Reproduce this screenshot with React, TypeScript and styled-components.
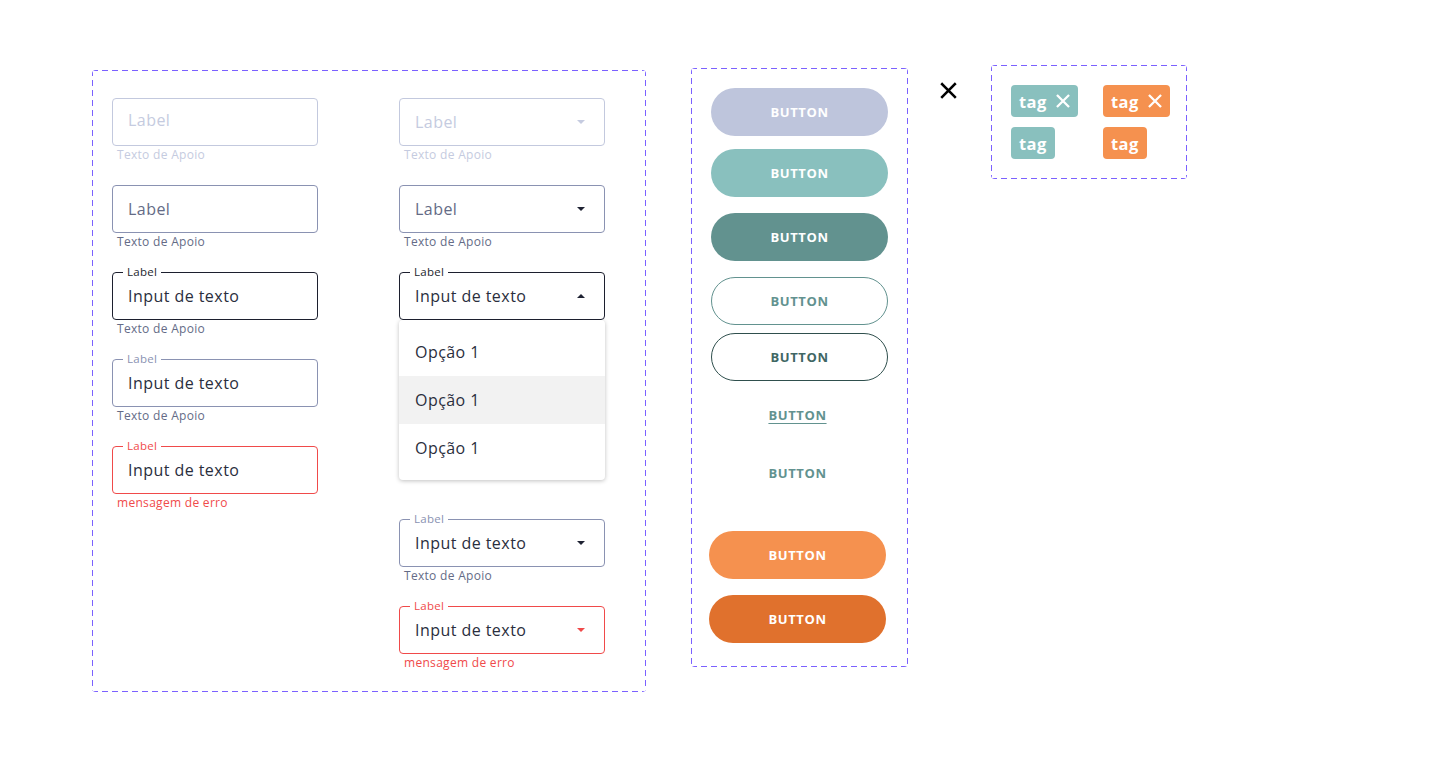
import * as React from 'react';
import styled, { createGlobalStyle } from 'styled-components';

const GlobalStyle = createGlobalStyle`
    body {
        margin: 0;
        background: #ffffff;
        font-family: 'Open Sans', 'Liberation Sans', Arial, sans-serif;
        color: #2a2e3d;
    }
`;

const DASH = '#7b61ff';

const Page = styled.div`
    display: flex;
    align-items: flex-start;
    padding: 65px 0 0 92px;
`;

const DashedPanel = styled.div`
    box-sizing: border-box;
    border-radius: 4px;
    background:
        repeating-linear-gradient(90deg, ${DASH} 0 6px, transparent 6px 10px) top left / 100% 1px no-repeat,
        repeating-linear-gradient(90deg, ${DASH} 0 6px, transparent 6px 10px) bottom left / 100% 1px no-repeat,
        repeating-linear-gradient(180deg, ${DASH} 0 6px, transparent 6px 10px) top left / 1px 100% no-repeat,
        repeating-linear-gradient(180deg, ${DASH} 0 6px, transparent 6px 10px) top right / 1px 100% no-repeat;
`;

const FormPanel = styled(DashedPanel)`
    display: flex;
    gap: 81px;
    width: 554px;
    height: 622px;
    margin-top: 5px;
    padding: 28px 0 0 20px;
`;

const Column = styled.div`
    display: flex;
    flex-direction: column;
    gap: 22px;
    width: 206px;
`;

const Group = styled.div`
    display: flex;
    flex-direction: column;
`;

type FieldState = 'disabled' | 'default' | 'focused' | 'filled' | 'error';

const palette: Record<FieldState, { border: string; label: string; helper: string; caret: string }> = {
    disabled: { border: '#c3c9de', label: '#c5cbe0', helper: '#c5cbe0', caret: '#c5cbe0' },
    default: { border: '#8a92b2', label: '#646b86', helper: '#646b86', caret: '#1f2233' },
    focused: { border: '#1c1f2e', label: '#1c1f2e', helper: '#646b86', caret: '#1f2233' },
    filled: { border: '#8a92b2', label: '#8a92b2', helper: '#646b86', caret: '#1f2233' },
    error: { border: '#f04a4a', label: '#f04a4a', helper: '#f04a4a', caret: '#f04a4a' },
};

const FieldBox = styled.div<{ $state: FieldState; $raise?: boolean }>`
    position: relative;
    box-sizing: border-box;
    display: flex;
    align-items: center;
    justify-content: space-between;
    height: 48px;
    padding: ${p => (p.$raise ? '0 19px 5px 15px' : '0 19px 0 15px')};
    border: 1px solid ${p => palette[p.$state].border};
    border-radius: 4px;
    background: #ffffff;
    letter-spacing: 0.45px;
`;

const FloatLabel = styled.span<{ $state: FieldState }>`
    position: absolute;
    top: -8px;
    left: 10px;
    padding: 0 4px;
    background: #ffffff;
    font-size: 11.5px;
    line-height: 14px;
    letter-spacing: 0.3px;
    color: ${p => palette[p.$state].label};
`;

const Placeholder = styled.span<{ $state: FieldState }>`
    font-size: 16px;
    color: ${p => palette[p.$state].label};
`;

const Value = styled.span`
    font-size: 16px;
    color: #2a2e3d;
`;

const Caret = styled.span<{ $color: string; $up?: boolean }>`
    width: 0;
    height: 0;
    border-left: 4px solid transparent;
    border-right: 4px solid transparent;
    ${p => (p.$up ? `border-bottom: 4px solid ${p.$color};` : `border-top: 4px solid ${p.$color};`)}
`;

const Helper = styled.span<{ $state: FieldState }>`
    margin-top: 1px;
    padding-left: 5px;
    font-size: 12px;
    line-height: 16px;
    letter-spacing: 0.3px;
    color: ${p => palette[p.$state].helper};
`;

const Menu = styled.ul`
    margin: 0 0 17px;
    padding: 8px 0;
    list-style: none;
    background: #ffffff;
    border-radius: 4px;
    box-shadow: 0 1px 4px rgba(0, 0, 0, 0.25);
`;

const Option = styled.li<{ $active?: boolean }>`
    display: flex;
    align-items: center;
    height: 48px;
    padding: 0 16px;
    font-size: 16px;
    letter-spacing: 0.45px;
    color: #2a2e3d;
    background: ${p => (p.$active ? '#f2f2f2' : 'transparent')};
`;

interface IFieldProps {
    state: FieldState;
    label?: string;
    value?: string;
    helper?: string;
    select?: boolean;
    open?: boolean;
    raise?: boolean;
    children?: React.ReactNode;
}

const Field: React.FunctionComponent<IFieldProps> = ({ state, label, value, helper, select, open, raise, children }) => (
    <Group>
        <FieldBox $state={state} $raise={raise}>
            {label && <FloatLabel $state={state}>{label}</FloatLabel>}
            {value ? <Value>{value}</Value> : <Placeholder $state={state}>Label</Placeholder>}
            {select && <Caret $color={palette[state].caret} $up={open} />}
        </FieldBox>
        {children}
        {helper && <Helper $state={state}>{helper}</Helper>}
    </Group>
);

const ButtonPanel = styled(DashedPanel)`
    display: flex;
    flex-direction: column;
    width: 217px;
    margin: 3px 0 0 45px;
    padding: 20px 20px 24px;
`;

type BtnVariant = 'soft' | 'light' | 'primary' | 'outline' | 'outlineDark' | 'link' | 'text' | 'orange' | 'orangeDark';

const btnStyles: Record<BtnVariant, string> = {
    soft: 'background: #bec5dc; color: #ffffff;',
    light: 'background: #89c0be; color: #ffffff;',
    primary: 'background: #62928f; color: #ffffff;',
    outline: 'background: #ffffff; color: #62928f; border: 1px solid #62928f;',
    outlineDark: 'background: #ffffff; color: #3f6764; border: 1px solid #2f4f4d;',
    link: 'background: transparent; color: #62928f; text-decoration: underline; text-underline-offset: 3px;',
    text: 'background: transparent; color: #62928f;',
    orange: 'background: #f5914f; color: #ffffff;',
    orangeDark: 'background: #e0712d; color: #ffffff;',
};

const Button = styled.button<{ $variant: BtnVariant; $mt: number; $shift?: number }>`
    box-sizing: border-box;
    width: 177px;
    height: 48px;
    margin-top: ${p => p.$mt}px;
    margin-left: ${p => -(p.$shift || 0)}px;
    border: none;
    border-radius: 24px;
    font-family: 'Open Sans', Arial, sans-serif;
    font-size: 13px;
    font-weight: 700;
    letter-spacing: 0.6px;
    text-transform: uppercase;
    ${p => btnStyles[p.$variant]}
`;

const CloseMark = styled.div`
    flex: none;
    margin: 17px 0 0 32px;
    line-height: 0;
`;

const TagPanel = styled(DashedPanel)`
    display: grid;
    grid-template-columns: 92px auto;
    row-gap: 10px;
    align-items: start;
    justify-items: start;
    width: 196px;
    height: 114px;
    margin-left: 34px;
    padding: 20px;
`;

const Tag = styled.span<{ $color: string }>`
    display: inline-flex;
    align-items: center;
    gap: 9px;
    height: 32px;
    padding: 0 8px;
    border-radius: 4px;
    background: ${p => p.$color};
    color: #ffffff;
    font-size: 16.5px;
    font-weight: 700;
    letter-spacing: 0.4px;
`;

const CrossIcon = ({ size, stroke, width }: { size: number; stroke: string; width: number }) => (
    <svg width={size} height={size} viewBox="0 0 16 16" fill="none">
        <path d="M2 2L14 14M14 2L2 14" stroke={stroke} strokeWidth={width} strokeLinecap="square" />
    </svg>
);

const TEAL = '#89c0be';
const ORANGE = '#f5914f';

const App: React.FunctionComponent = () => (
    <Page>
        <GlobalStyle />
        <FormPanel>
            <Column>
                <Field state="disabled" helper="Texto de Apoio" raise />
                <Field state="default" helper="Texto de Apoio" />
                <Field state="focused" label="Label" value="Input de texto" helper="Texto de Apoio" />
                <Field state="filled" label="Label" value="Input de texto" helper="Texto de Apoio" />
                <Field state="error" label="Label" value="Input de texto" helper="mensagem de erro" />
            </Column>
            <Column>
                <Field state="disabled" helper="Texto de Apoio" select />
                <Field state="default" helper="Texto de Apoio" select />
                <Field state="focused" label="Label" value="Input de texto" select open>
                    <Menu>
                        <Option>Opção 1</Option>
                        <Option $active>Opção 1</Option>
                        <Option>Opção 1</Option>
                    </Menu>
                </Field>
                <Field state="filled" label="Label" value="Input de texto" helper="Texto de Apoio" select />
                <Field state="error" label="Label" value="Input de texto" helper="mensagem de erro" select />
            </Column>
        </FormPanel>

        <ButtonPanel>
            <Button $variant="soft" $mt={0}>Button</Button>
            <Button $variant="light" $mt={13}>Button</Button>
            <Button $variant="primary" $mt={16}>Button</Button>
            <Button $variant="outline" $mt={16}>Button</Button>
            <Button $variant="outlineDark" $mt={8}>Button</Button>
            <Button $variant="link" $mt={10} $shift={2}>Button</Button>
            <Button $variant="text" $mt={10} $shift={2}>Button</Button>
            <Button $variant="orange" $mt={34} $shift={2}>Button</Button>
            <Button $variant="orangeDark" $mt={16} $shift={2}>Button</Button>
        </ButtonPanel>

        <CloseMark>
            <CrossIcon size={17} stroke="#000000" width={2.4} />
        </CloseMark>

        <TagPanel>
            <Tag $color={TEAL}>tag <CrossIcon size={14} stroke="#ffffff" width={2.6} /></Tag>
            <Tag $color={ORANGE}>tag <CrossIcon size={14} stroke="#ffffff" width={2.6} /></Tag>
            <Tag $color={TEAL}>tag</Tag>
            <Tag $color={ORANGE}>tag</Tag>
        </TagPanel>
    </Page>
);

export default App;
